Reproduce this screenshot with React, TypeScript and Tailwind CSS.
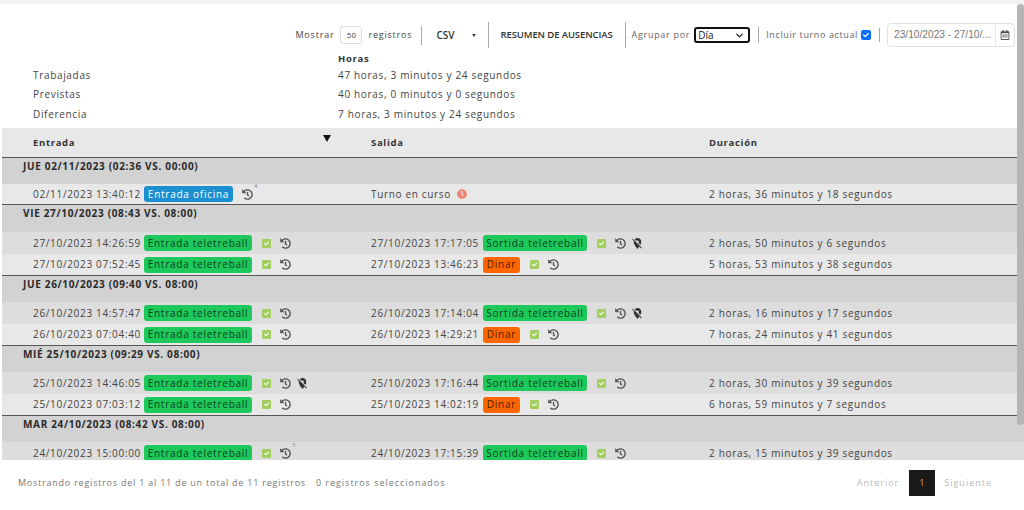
import React from 'react';
import { FaCheck, FaClock, FaHistory, FaRegCalendarAlt } from 'react-icons/fa';
import { MdLocationOff } from 'react-icons/md';
import { ChevronDown } from 'lucide-react';

type Mark = { date: string; badge: string; check?: boolean; pin?: boolean; count?: string };
type Row = { entrada: Mark; salida?: Mark; duracion: string };
type Group = { title: string; rows: Row[] };

const groups: Group[] = [
    {
        title: 'JUE 02/11/2023 (02:36 VS. 00:00)',
        rows: [
            {
                entrada: { date: '02/11/2023 13:40:12', badge: 'Entrada oficina', count: '4' },
                duracion: '2 horas, 36 minutos y 18 segundos',
            },
        ],
    },
    {
        title: 'VIE 27/10/2023 (08:43 VS. 08:00)',
        rows: [
            {
                entrada: { date: '27/10/2023 14:26:59', badge: 'Entrada teletreball', check: true },
                salida: { date: '27/10/2023 17:17:05', badge: 'Sortida teletreball', check: true, pin: true },
                duracion: '2 horas, 50 minutos y 6 segundos',
            },
            {
                entrada: { date: '27/10/2023 07:52:45', badge: 'Entrada teletreball', check: true },
                salida: { date: '27/10/2023 13:46:23', badge: 'Dinar', check: true },
                duracion: '5 horas, 53 minutos y 38 segundos',
            },
        ],
    },
    {
        title: 'JUE 26/10/2023 (09:40 VS. 08:00)',
        rows: [
            {
                entrada: { date: '26/10/2023 14:57:47', badge: 'Entrada teletreball', check: true },
                salida: { date: '26/10/2023 17:14:04', badge: 'Sortida teletreball', check: true, pin: true },
                duracion: '2 horas, 16 minutos y 17 segundos',
            },
            {
                entrada: { date: '26/10/2023 07:04:40', badge: 'Entrada teletreball', check: true },
                salida: { date: '26/10/2023 14:29:21', badge: 'Dinar', check: true },
                duracion: '7 horas, 24 minutos y 41 segundos',
            },
        ],
    },
    {
        title: 'MIÉ 25/10/2023 (09:29 VS. 08:00)',
        rows: [
            {
                entrada: { date: '25/10/2023 14:46:05', badge: 'Entrada teletreball', check: true, pin: true },
                salida: { date: '25/10/2023 17:16:44', badge: 'Sortida teletreball', check: true },
                duracion: '2 horas, 30 minutos y 39 segundos',
            },
            {
                entrada: { date: '25/10/2023 07:03:12', badge: 'Entrada teletreball', check: true },
                salida: { date: '25/10/2023 14:02:19', badge: 'Dinar', check: true },
                duracion: '6 horas, 59 minutos y 7 segundos',
            },
        ],
    },
    {
        title: 'MAR 24/10/2023 (08:42 VS. 08:00)',
        rows: [
            {
                entrada: { date: '24/10/2023 15:00:00', badge: 'Entrada teletreball', check: true, count: '3' },
                salida: { date: '24/10/2023 17:15:39', badge: 'Sortida teletreball', check: true },
                duracion: '2 horas, 15 minutos y 39 segundos',
            },
        ],
    },
];

const badgeClass = (badge: string) => {
    if (badge === 'Dinar') return 'w-[37px] bg-[#ff6600] text-[#4a1e00]';
    if (badge === 'Entrada oficina') return 'w-[89px] bg-[#1b8fd0] text-white';
    if (badge === 'Sortida teletreball') return 'w-[104px] bg-[#1cc95a] text-[#0c3f20]';
    return 'w-[108px] bg-[#1cc95a] text-[#0c3f20]';
};

const Cell: React.FC<{ mark: Mark; salida?: boolean }> = ({ mark, salida }) => (
    <div className="flex items-center">
        <span className={`shrink-0 whitespace-nowrap ${salida ? 'w-[112px]' : 'w-[111px]'}`}>{mark.date}</span>
        <span className={`flex h-[16px] shrink-0 items-center justify-center whitespace-nowrap rounded-[3px] tracking-[0.75px] ${badgeClass(mark.badge)}`}>
            {mark.badge}
        </span>
        {mark.check && (
            <span className="ml-[10px] flex h-[9px] w-[9px] items-center justify-center rounded-[1px] bg-[#a2cf5f] text-white">
                <FaCheck size={5} />
            </span>
        )}
        <span className="relative ml-[9px] text-[#555]">
            <FaHistory size={11} />
            {mark.count && (
                <span className="absolute left-[12px] top-[-6px] text-[6px] leading-none tracking-normal text-[#888]">{mark.count}</span>
            )}
        </span>
        {mark.pin && <MdLocationOff size={13} className="ml-[5px] text-[#333]" />}
    </div>
);

const Sep: React.FC<{ h: string }> = ({ h }) => <span className={`w-px bg-[#aaa] ${h}`} />;

export default function App() {
    return (
        <div className="relative flex h-[510px] w-[1024px] flex-col overflow-hidden bg-white font-['Open_Sans',sans-serif] text-[10px] tracking-[0.67px] text-[#444]">
            <div className="h-[4px] shrink-0 bg-[#f1f1f1]" />

            <div className="flex h-[44px] shrink-0 items-center justify-end pr-[9px] pt-[18px] text-[9px] tracking-[0.8px]">
                <span>Mostrar</span>
                <span className="mx-[6px] flex h-[18px] w-[22px] items-center justify-center rounded-[3px] border border-[#ddd] text-[8px] tracking-normal">50</span>
                <span>registros</span>
                <span className="ml-[9px]"><Sep h="block h-[19px]" /></span>
                <span className="ml-[14px] text-[10px] font-semibold tracking-normal text-[#333]">CSV</span>
                <span className="ml-[18px] h-0 w-0 border-x-[2.5px] border-t-[3px] border-x-transparent border-t-[#444]" />
                <span className="ml-[12px]"><Sep h="block h-[26px]" /></span>
                <span className="ml-[11px] text-[9.5px] font-semibold tracking-[-0.1px] text-[#333]">RESUMEN DE AUSENCIAS</span>
                <span className="ml-[12px]"><Sep h="block h-[26px]" /></span>
                <span className="ml-[6px] tracking-[0.7px] text-[#666]">Agrupar por</span>
                <span className="ml-[4px] flex h-[16px] w-[56px] items-center justify-between rounded-[3px] border-2 border-[#111] px-[2px] text-[10px] tracking-normal text-[#222]">
                    Día
                    <ChevronDown size={11} strokeWidth={3} className="mr-[1px]" />
                </span>
                <span className="ml-[8px]"><Sep h="block h-[16px]" /></span>
                <span className="ml-[7px] tracking-[0.62px] text-[#666]">Incluir turno actual</span>
                <span className="ml-[3px] flex h-[10px] w-[10px] items-center justify-center rounded-[2px] bg-[#0b6efd] text-white">
                    <FaCheck size={6} />
                </span>
                <span className="ml-[8px]"><Sep h="block h-[14px]" /></span>
                <span className="ml-[7px] flex h-[24px] w-[128px] items-center rounded-[4px] border border-[#dee2e6]">
                    <span className="flex-1 whitespace-nowrap pl-[6px] font-['Liberation_Sans',sans-serif] text-[10.2px] tracking-normal text-[#777]">23/10/2023 - 27/10/...</span>
                    <span className="flex h-full w-[19px] items-center justify-center border-l border-[#e5e7eb] text-[#555]">
                        <FaRegCalendarAlt size={10} />
                    </span>
                </span>
            </div>

            <div className="grid h-[80px] shrink-0 grid-cols-[338px_1fr] content-start">
                <span />
                <span className="h-[18px] pt-[4px] text-[9.5px] font-bold leading-[14px] text-[#333]">Horas</span>
                <span className="flex h-[19px] items-center pl-[33px]">Trabajadas</span>
                <span className="flex h-[19px] items-center">47 horas, 3 minutos y 24 segundos</span>
                <span className="flex h-[19px] items-center pl-[33px]">Previstas</span>
                <span className="flex h-[19px] items-center">40 horas, 0 minutos y 0 segundos</span>
                <span className="flex h-[20px] items-center pl-[33px]">Diferencia</span>
                <span className="flex h-[20px] items-center">7 horas, 3 minutos y 24 segundos</span>
            </div>

            <div className="ml-[2px] h-[332px] shrink-0 overflow-hidden">
                <div className="relative grid h-[29px] grid-cols-[338px_338px_1fr] items-center bg-[#e8e8e8] pl-[31px] pt-[2px] text-[9.5px] font-bold text-[#333]">
                    <span>Entrada</span>
                    <span>Salida</span>
                    <span>Duración</span>
                    <span className="absolute left-[321px] top-[7px] h-0 w-0 border-x-[4px] border-t-[7px] border-x-transparent border-t-[#111]" />
                </div>
                {groups.map((group, g) => (
                    <div key={group.title}>
                        <div className={`border-t border-[#555] bg-[#d2d2d2] pl-[21px] pt-[1px] text-[10px] font-bold leading-[14px] text-[#2a2a2a] ${g === 1 ? 'h-[28px]' : 'h-[27px]'}`}>
                            {group.title}
                        </div>
                        {group.rows.map((row, r) => (
                            <div
                                key={r}
                                className={`grid grid-cols-[338px_338px_1fr] items-center pl-[31px] ${g === 0 ? 'h-[20px] bg-[#e8e8e8]' : r === 0 ? 'h-[22px] bg-[#dddddd]' : 'h-[21px] bg-[#e8e8e8]'}`}
                            >
                                <Cell mark={row.entrada} />
                                {row.salida ? (
                                    <Cell mark={row.salida} salida />
                                ) : (
                                    <div className="flex items-center">
                                        Turno en curso
                                        <FaClock size={10} className="ml-[6px] text-[#ec8575]" />
                                    </div>
                                )}
                                <span>{row.duracion}</span>
                            </div>
                        ))}
                    </div>
                ))}
            </div>

            <div className="flex flex-1 items-start justify-between pl-[18px] pr-[32px] pt-[10px] text-[9px] tracking-[0.77px] text-[#777]">
                <div className="flex h-[26px] items-center">
                    <span>Mostrando registros del 1 al 11 de un total de 11 registros</span>
                    <span className="ml-[10px] tracking-[0.97px]">0 registros seleccionados</span>
                </div>
                <div className="flex h-[26px] items-center tracking-[1px] text-[#bbb]">
                    <span>Anterior</span>
                    <span className="ml-[10px] mr-[9px] flex h-[26px] w-[26px] items-center justify-center bg-[#1a1a1a] text-[#e0a040]">1</span>
                    <span>Siguiente</span>
                </div>
            </div>

            <div className="absolute right-0 top-[4px] h-[421px] w-[7px] rounded-[3px] bg-[#b5b5b5]" />
        </div>
    );
}
